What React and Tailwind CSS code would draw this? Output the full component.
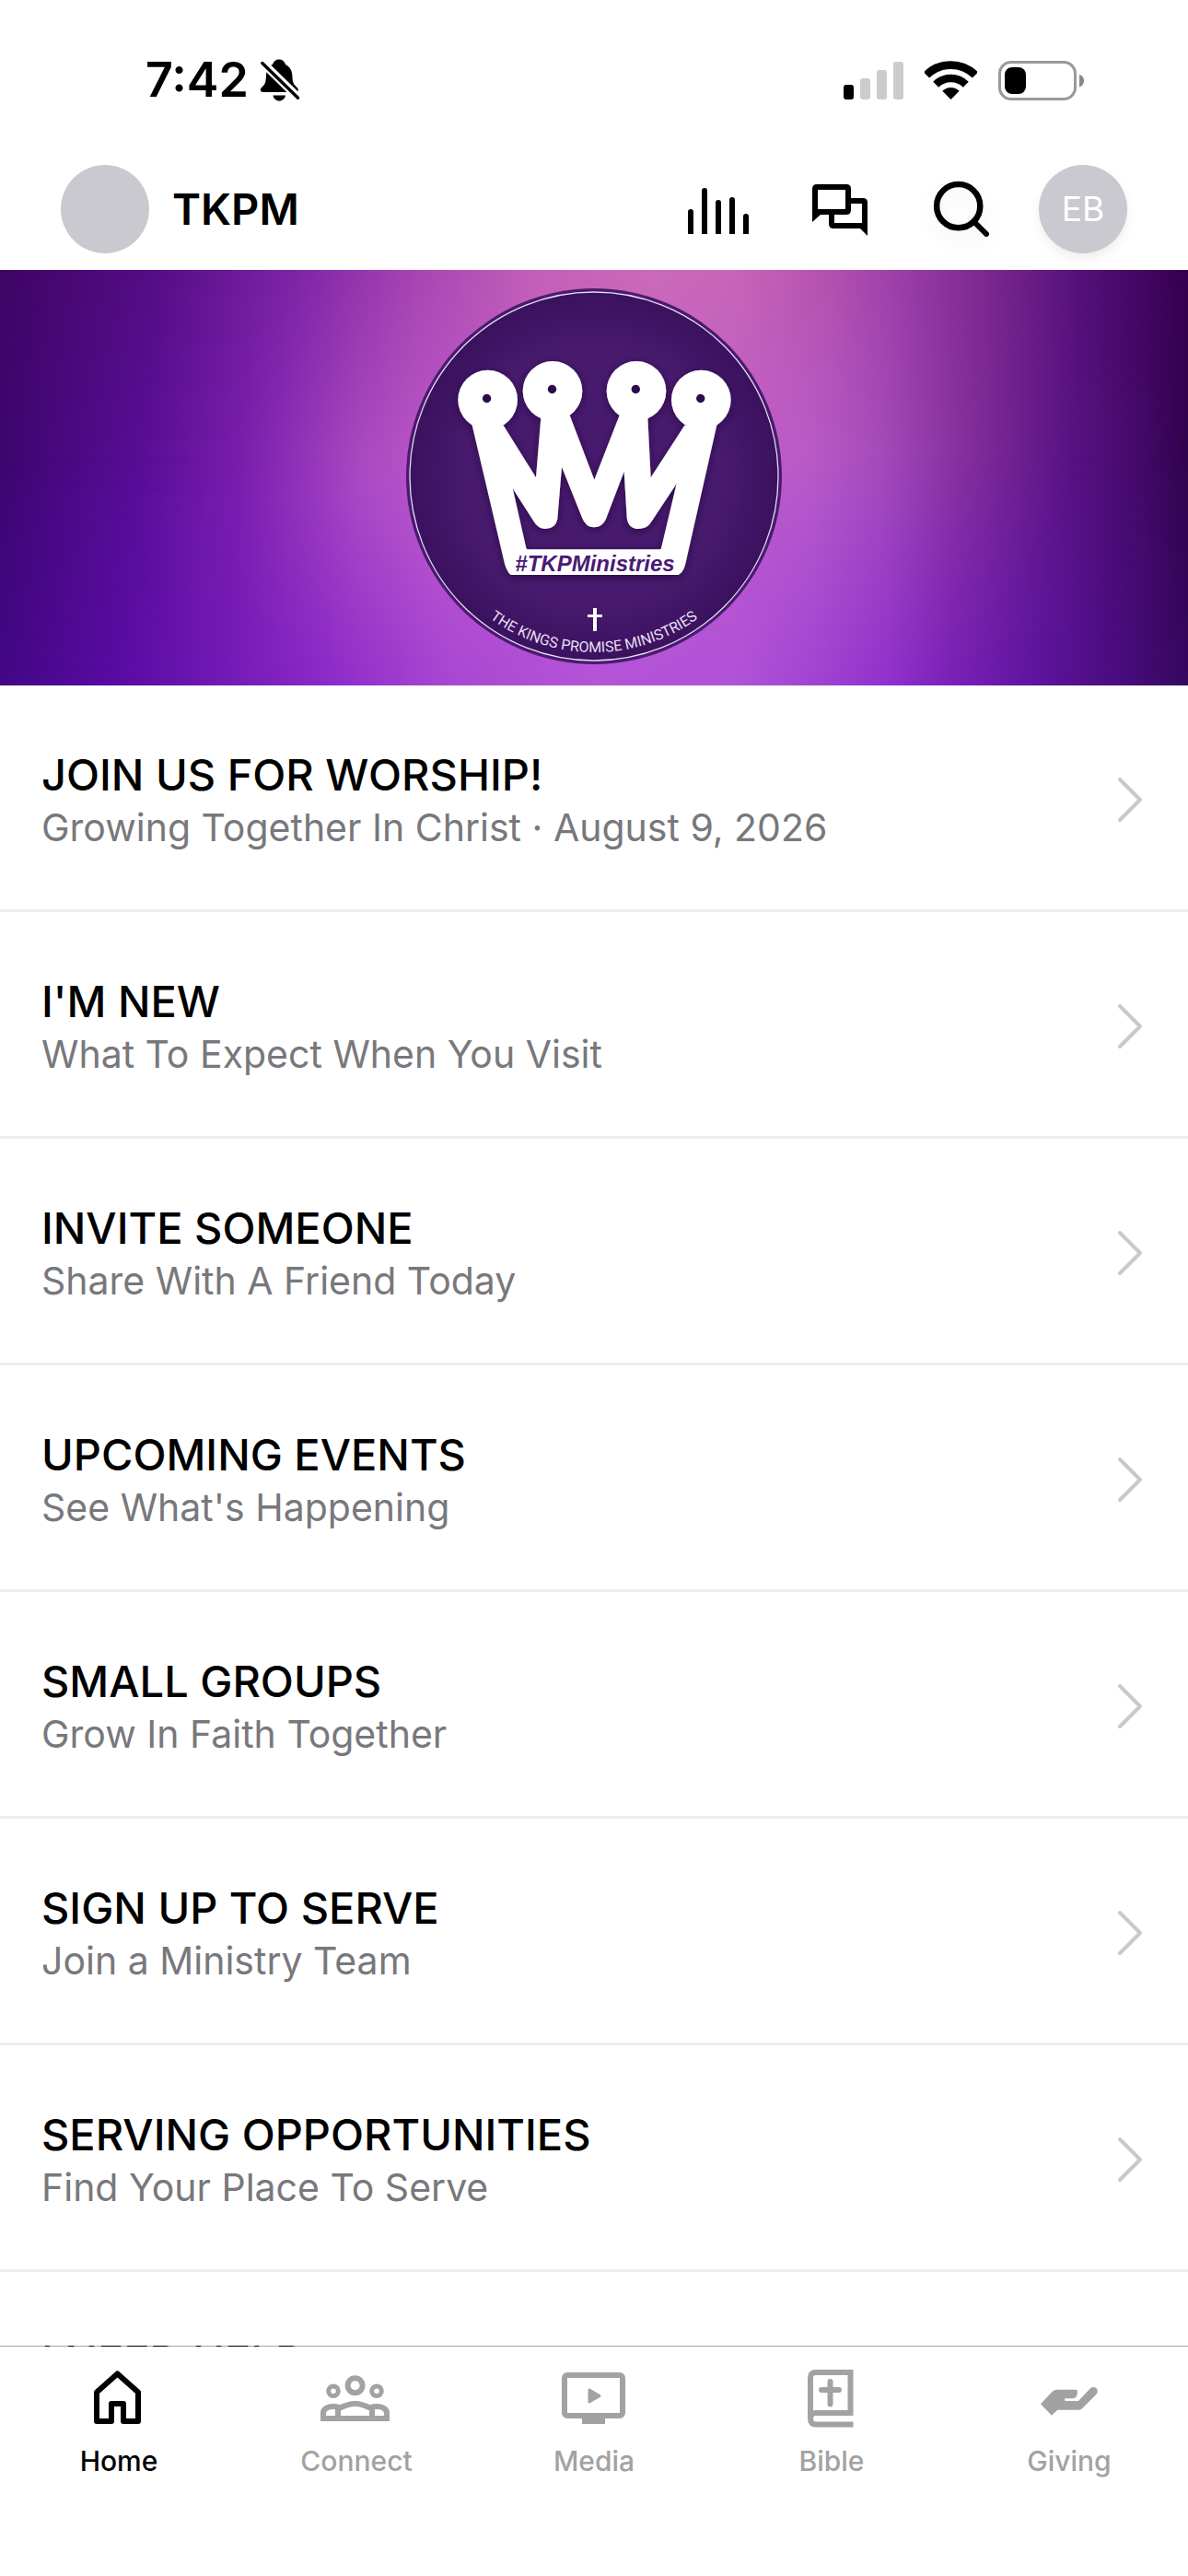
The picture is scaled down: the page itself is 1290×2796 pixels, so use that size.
const ROWS = [
  ["JOIN US FOR WORSHIP!", "Growing Together In Christ · August 9, 2026"],
  ["I'M NEW", "What To Expect When You Visit"],
  ["INVITE SOMEONE", "Share With A Friend Today"],
  ["UPCOMING EVENTS", "See What's Happening"],
  ["SMALL GROUPS", "Grow In Faith Together"],
  ["SIGN UP TO SERVE", "Join a Ministry Team"],
  ["SERVING OPPORTUNITIES", "Find Your Place To Serve"],
  ["I NEED HELP", ""],
];

function BellOff() {
  return (
    <svg viewBox="0 0 44 48" className="h-12 w-11" aria-hidden="true">
      <path d="M21 1.5C24.5 1.5 27 3.5 28 7C34 10 35.5 15.5 35.5 21C35.5 28 38 29 41 32.5C42.5 34.5 42 37 39 37H4C.5 37 0 34 2 32C6 28.5 6.5 27 7 19C7.3 13 9 9 14 7C15 3.5 17.5 1.5 21 1.5Z" />
      <path d="M14.500 40.500H28C27.500 44 24.500 46.500 21.200 46.500S15 44 14.500 40.500Z" />
      <path d="M2 4L42.500 43.500" stroke="#fff" strokeWidth="9" />
      <path d="M2.800 5.500L41.500 43.200" stroke="#000" strokeWidth="3.400" strokeLinecap="round" />
    </svg>
  );
}

function StatusBar() {
  return (
    <div className="flex h-40 items-center justify-between pt-3.5 pl-[158px] pr-[113px]">
      <div className="flex items-center gap-3">
        <span className="text-[52px] leading-[60px] font-semibold">7:42</span>
        <BellOff />
      </div>
      <div className="flex items-center gap-[23px]">
        <svg viewBox="0 0 65 43" className="h-[43px] w-[65px]" aria-hidden="true">
          <rect y="26" width="11" height="16" rx="3" />
          <rect x="18" y="19" width="11" height="23" rx="3" fill="#ccc" />
          <rect x="36" y="10" width="11" height="32" rx="3" fill="#ccc" />
          <rect x="54" y="1" width="11" height="41" rx="3" fill="#ccc" />
        </svg>
        <svg viewBox="0 0 57 43" className="h-[43px] w-[57px]" fill="none" stroke="#000" aria-hidden="true">
          <path d="M2 15.500A37.500 37.500 0 0 1 55 15.500" strokeWidth="8.800" />
          <path d="M12.200 25.700A23 23 0 0 1 44.800 25.700" strokeWidth="8.400" />
          <path d="M28.500 42L19.300 32.800A13 13 0 0 1 37.700 32.800Z" fill="#000" stroke="none" />
        </svg>
        <svg viewBox="0 0 93 43" className="h-[43px] w-[93px]" aria-hidden="true">
          <rect x="1.500" y="1.500" width="82" height="40" rx="12.500" fill="none" stroke="#999" strokeWidth="3" />
          <rect x="7" y="7" width="23" height="29" rx="8" />
          <path d="M88 15C91.500 16 93 19 93 21.500S91.500 27.500 88 28.500Z" fill="#888" />
        </svg>
      </div>
    </div>
  );
}

function Header() {
  const btn = "flex size-24 items-center justify-center";
  return (
    <header className="flex items-center justify-between px-[66px] pt-[19px] pb-[18px]">
      <div className="flex items-center gap-[25px]">
        <div className="size-24 rounded-full bg-[#c9c9cf]" />
        <h1 className="text-[47px] leading-[60px] font-semibold">TKPM</h1>
      </div>
      <div className="flex items-center gap-9">
        <button className={btn} aria-label="Activity">
          <svg viewBox="0 0 66 60" className="h-[60px] w-[66px]">
            <path d="M0 57V33q0-3 3-3t3 3V57ZM15 57V10q0-3 3-3t3 3V57ZM30 57V23q0-3 3-3t3 3V57ZM45 57V20q0-3 3-3t3 3V57ZM60 57V38q0-3 3-3t3 3V57Z" />
          </svg>
        </button>
        <button className={btn} aria-label="Messages">
          <svg viewBox="0 0 60 60" className="size-[60px]">
            <path d="M5 3H37Q42 3 42 8V31Q42 36 37 36H9L0 44V8Q0 3 5 3ZM6 9V30H36V9Z" fillRule="evenodd" />
            <path d="M42 18H55Q60 18 60 23V59L52 51H23Q18 51 18 46V36H24V45H54V24H42Z" />
          </svg>
        </button>
        <button className={btn} aria-label="Search">
          <svg viewBox="0 0 60 60" className="size-[60px] overflow-visible drop-shadow-[0_9px_9px_rgba(0,0,0,0.06)]" fill="none" stroke="#000" strokeLinecap="round">
            <circle cx="26.700" cy="26.700" r="23.600" strokeWidth="6.500" />
            <path d="M45 45L57 57" strokeWidth="6" />
          </svg>
        </button>
        <button className="flex size-24 items-center justify-center rounded-full bg-[#c9c9cf] text-[37px] leading-[48px] text-white shadow-[0_6px_12px_rgba(0,0,0,0.07)]">
          EB
        </button>
      </div>
    </header>
  );
}

function Banner() {
  return (
    <section className="relative flex h-[451px] justify-center overflow-hidden bg-[linear-gradient(90deg,#3e0566_0%,#560d85_13%,#7a22a5_24%,#a844b3_35%,#c460b8_45%,#cc6aba_55%,#c865b8_62%,#b450ae_70%,#9a3da8_76%,#7c2890_83%,#55107a_91%,#35004f_100%)]">
      <div className="absolute inset-0 bg-[linear-gradient(90deg,#3c0670_0%,#5a0e9a_12%,#7a1eb0_20%,#ac4cc4_30%,#bd5acb_36%,#bd5acb_64%,#b95ccb_68%,#a54dbe_74%,#84309f_81%,#5a1285_90%,#430a6a_96%,#30044c_100%)] [mask-image:linear-gradient(transparent,black_55%)]" />
      <div className="absolute inset-0 bg-[linear-gradient(90deg,#420785_0%,#5a0ba4_10%,#7018b4_18%,#8a28c8_27%,#a946d2_38%,#b454d8_50%,#b052d8_62%,#9f42d2_69%,#8f30cc_75%,#7a20b8_80%,#5f14a0_87%,#4a0c80_94%,#35085f_100%)] [mask-image:linear-gradient(transparent_45%,black)]" />
      <svg viewBox="0 -7 430 451" className="relative h-full" role="img" aria-label="The Kings Promise Ministries">
        <defs>
          <radialGradient id="disc">
            <stop offset="0.700" stopColor="#481a6d" />
            <stop offset="1" stopColor="#3a115f" />
          </radialGradient>
          <filter id="soft" x="-20%" y="-20%" width="140%" height="140%">
            <feDropShadow dx="0" dy="2" stdDeviation="4" floodColor="#1a0038" floodOpacity="0.700" />
          </filter>
          <path id="arc" d="M24 217A191 191 0 0 0 406 217" />
        </defs>
        <circle cx="215" cy="217" r="204" fill="#4a1a70" />
        <circle cx="215" cy="217" r="200" fill="url(#disc)" stroke="#e6dcf0" strokeWidth="1.300" />
        <g filter="url(#soft)" fill="#fff">
          <g transform="scale(0.33333)">
            <path
              fillRule="evenodd"
              d="M247 480L355 940Q365 968 375 972H920Q935 965 942 940L1046 480L940 485L830 655L820 460L728 452L646 662L566 452L472 460L456 655L350 485ZM380 690L447 795Q462 822 487 822Q520 822 526 790L540 620L606 785Q618 817 645 817Q673 817 684 790L743 635L752 785Q756 822 790 822Q815 822 828 805L914 675L864 885Q863 889 858 889H430Q425 889 424 884Z"
            />
            <circle cx="299" cy="402" r="97" />
            <circle cx="510" cy="373" r="97" />
            <circle cx="783" cy="373" r="97" />
            <circle cx="994" cy="402" r="97" />
          </g>
        </g>
        <g fill="#2c0b4d">
          <circle cx="98.600" cy="132.500" r="4.700" />
          <circle cx="169.500" cy="122.500" r="4.700" />
          <circle cx="260.300" cy="122.500" r="4.700" />
          <circle cx="330.700" cy="132.500" r="4.700" />
        </g>
        <text x="216" y="320" textAnchor="middle" fill="#4a1a75" className="font-['Liberation_Sans',sans-serif] text-[24px] font-bold italic">
          #TKPMinistries
        </text>
        <path d="M214 360h4v7h6v3h-6v15h-4v-15h-6v-3h6z" fill="#fff" />
        <text fill="#e6dff0" textAnchor="middle" className="font-[Roboto,sans-serif] text-[16px]">
          <textPath href="#arc" startOffset="50%">THE KINGS PROMISE MINISTRIES</textPath>
        </text>
      </svg>
    </section>
  );
}

function Row({ title, subtitle }) {
  return (
    <li>
      <a href="#" className="flex items-center justify-between border-b-[3px] border-[#ededed] pt-[67px] pr-[49px] pb-[62px] pl-[45px]">
        <span className="flex flex-col">
          <span className="text-[47px] leading-[60px] font-medium">{title}</span>
          <span className="min-h-[54px] text-[41px] leading-[54px] text-[#78787c]">{subtitle}</span>
        </span>
        <svg viewBox="0 0 28 50" className="h-[50px] w-7" fill="none" stroke="#c8c8ce" strokeWidth="4" strokeLinecap="round" strokeLinejoin="round" aria-hidden="true">
          <path d="M3 3L25 25L3 47" />
        </svg>
      </a>
    </li>
  );
}

const TABS = [
  {
    label: "Home",
    icon: <path d="M37.500 8.500L15 28.500V60H31V41H44V60H60V28.500Z" />,
  },
  {
    label: "Connect",
    icon: (
      <>
        <circle cx="37.600" cy="21.300" r="8" />
        <circle cx="14" cy="27.300" r="5.300" strokeWidth="5" />
        <circle cx="61" cy="27.300" r="5.300" strokeWidth="5" />
        <path strokeLinejoin="miter" d="M19 57V46.500C24 44 30 41 37.500 41S51 44 56 46.500V57M20 45C18 44.300 16 44 14 44C8 44 3 46.500 3 51V57H72V51C72 46.500 67 44 61 44C59 44 57 44.300 55 45" />
      </>
    ),
  },
  {
    label: "Media",
    icon: (
      <>
        <rect x="7" y="10" width="63" height="44" rx="3" />
        <path d="M26 55H51V63H26Z" fill="currentColor" stroke="none" />
        <path d="M34 26L45 32.500L34 39Z" fill="currentColor" strokeWidth="3" />
      </>
    ),
  },
  {
    label: "Bible",
    icon: (
      <>
        <path strokeLinejoin="miter" d="M62.500 51H22Q16 51 16 57Q16 63.500 22 63.500H62.500M16 57V13Q16 7 22 7H59.500V51" />
        <path strokeLinecap="round" d="M37.500 17V41.500M28 26H47" />
      </>
    ),
  },
  {
    label: "Giving",
    icon: (
      <path
        fill="currentColor"
        stroke="none"
        d="M8 41.300L20.500 28Q22.500 25.700 26.500 25.700H46.500Q47.800 25.700 47.800 27V29.500Q47.800 35.300 42 35.300H35.500Q34 35.300 34 36.700Q34 38 35.500 38H49L62 24.300Q64.500 22 67.500 23.500Q71 26 69.300 29.500Q69 30.300 67.500 31.800L53 46.300Q51.500 47.700 49 47.700H26.300L20 53.700Z"
      />
    ),
  },
];

function TabBar() {
  return (
    <nav className="relative -mt-px grid shrink-0 grid-cols-5 border-t border-black/35 bg-white bg-clip-padding pt-[21px] pb-[105px]">
      {TABS.map((tab, i) => (
        <a key={tab.label} href="#" className={i === 0 ? "flex flex-col items-center gap-[11px] text-black" : "flex flex-col items-center gap-[11px] text-[#a2a2a2]"}>
          <svg viewBox="0 0 78 72" className="h-[72px] w-[78px]" fill="none" stroke="currentColor" strokeWidth="6" strokeLinejoin="round" aria-hidden="true">
            {tab.icon}
          </svg>
          <span className="text-[30px] leading-[40px] font-medium">{tab.label}</span>
        </a>
      ))}
    </nav>
  );
}

export default function App() {
  return (
    <div className="flex h-screen flex-col bg-white font-[Inter,sans-serif] text-black">
      <StatusBar />
      <Header />
      <main className="min-h-0 flex-1 overflow-hidden">
        <Banner />
        <ul>
          {ROWS.map(([title, subtitle]) => (
            <Row key={title} title={title} subtitle={subtitle} />
          ))}
        </ul>
      </main>
      <TabBar />
    </div>
  );
}
